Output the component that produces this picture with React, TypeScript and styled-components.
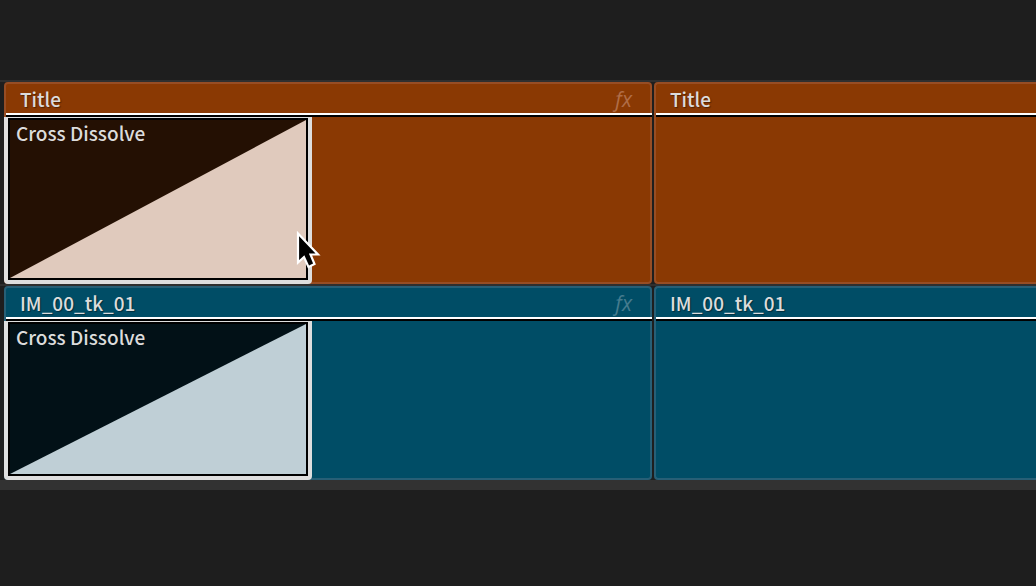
import React from 'react';
import styled, { createGlobalStyle } from 'styled-components';

type Palette = { fill: string; edge: string; fx: string; dark: string; light: string };

const orange: Palette = { fill: '#8a3903', edge: '#974d24', fx: '#b06d47', dark: '#241003', light: '#e0cabd' };
const blue: Palette = { fill: '#004d66', edge: '#275f76', fx: '#457b8e', dark: '#021117', light: '#bfcfd6' };

const GlobalStyle = createGlobalStyle`
  * { box-sizing: border-box; }
  body {
    margin: 0;
    background: #1e1e1e;
    color: #dcdcdc;
    font-family: "Noto Sans CJK SC", "Open Sans", sans-serif;
    font-size: 19px;
    font-weight: 500;
  }
`;

const Page = styled.main`
  min-height: 100vh;
  padding-top: 80px;
  overflow: hidden;
`;

const Timeline = styled.section`
  position: relative;
  border-top: 2px solid #2f2f2f;
  border-bottom: 10px solid #323232;
  display: flex;
  flex-direction: column;
`;

const Track = styled.div<{ $height: number; $divided?: boolean }>`
  box-sizing: content-box;
  display: flex;
  gap: 2px;
  height: ${(p) => p.$height}px;
  padding-left: 4px;
  background: #1e1e1e;
  border-bottom: ${(p) => (p.$divided ? '2px solid #2f2f2f' : '0')};
`;

const ClipBox = styled.article<{ $colors: Palette; $width?: number }>`
  flex: ${(p) => (p.$width ? `0 0 ${p.$width}px` : '1 0 0')};
  display: flex;
  flex-direction: column;
  background: ${(p) => p.$colors.fill};
  border: 2px solid ${(p) => p.$colors.edge};
  border-right-width: ${(p) => (p.$width ? 2 : 0)}px;
  border-radius: ${(p) => (p.$width ? '4px' : '4px 0 0 4px')};
`;

const ClipHeader = styled.header`
  display: flex;
  justify-content: space-between;
  height: 29px;
  padding: 1px 18px 0 14px;
  line-height: 28px;
`;

const ClipName = styled.span`
  text-shadow: 1px 1px 1px rgba(0, 0, 0, 0.4);
`;

const FxBadge = styled.span<{ $color: string }>`
  color: ${(p) => p.$color};
  font-family: "Open Sans", sans-serif;
  font-size: 21px;
  font-style: italic;
  font-weight: 400;
`;

const Rubberband = styled.div`
  flex: none;
  height: 4px;
  margin-right: -2px;
  background: #000;
  border-top: 2px solid #fff;
`;

const ClipBody = styled.div`
  flex: 1;
  display: flex;
  min-height: 0;
  margin: 0 0 -2px -2px;
`;

const TransitionBox = styled.div<{ $fill: string }>`
  display: grid;
  grid-template-rows: minmax(0, 1fr);
  width: 308px;
  min-height: 0;
  background: ${(p) => p.$fill};
  border: 4px solid #dedede;
  border-top-width: 1px;
  border-radius: 0 0 4px 4px;
`;

const Ramp = styled.svg`
  grid-area: 1 / 1;
  width: 100%;
  height: 100%;
  min-height: 0;
  border: 2px solid #000;
`;

const TransitionName = styled.span`
  grid-area: 1 / 1;
  padding: 1px 8px;
  line-height: 28px;
`;

const Pointer = styled.svg`
  position: absolute;
  left: 293px;
  top: 148px;
  width: 28px;
  height: 40px;
`;

function Transition({ name, colors }: { name: string; colors: Palette }) {
  return (
    <TransitionBox $fill={colors.dark}>
      <Ramp viewBox="0 0 100 100" preserveAspectRatio="none" aria-hidden="true">
        <path d="M0 100 100 0V100Z" fill={colors.light} />
      </Ramp>
      <TransitionName>{name}</TransitionName>
    </TransitionBox>
  );
}

function Clip(props: { name: string; colors: Palette; width?: number; transition?: string }) {
  const { name, colors, width, transition } = props;
  return (
    <ClipBox $colors={colors} $width={width}>
      <ClipHeader>
        <ClipName>{name}</ClipName>
        {width && <FxBadge $color={colors.fx}>fx</FxBadge>}
      </ClipHeader>
      <Rubberband />
      <ClipBody>{transition && <Transition name={transition} colors={colors} />}</ClipBody>
    </ClipBox>
  );
}

export default function App() {
  return (
    <>
      <GlobalStyle />
      <Page>
        <Timeline>
          <Track $height={202} $divided>
            <Clip name="Title" colors={orange} width={648} transition="Cross Dissolve" />
            <Clip name="Title" colors={orange} />
          </Track>
          <Track $height={194}>
            <Clip name="IM_00_tk_01" colors={blue} width={648} transition="Cross Dissolve" />
            <Clip name="IM_00_tk_01" colors={blue} />
          </Track>
          <Pointer viewBox="0 0 28 40" aria-hidden="true">
            <path
              d="M5 3.5V32.5L11 27L15.5 37L21.5 34L17.5 24.5H25Z"
              fill="#000"
              stroke="#fff"
              strokeWidth="2.2"
            />
          </Pointer>
        </Timeline>
      </Page>
    </>
  );
}
